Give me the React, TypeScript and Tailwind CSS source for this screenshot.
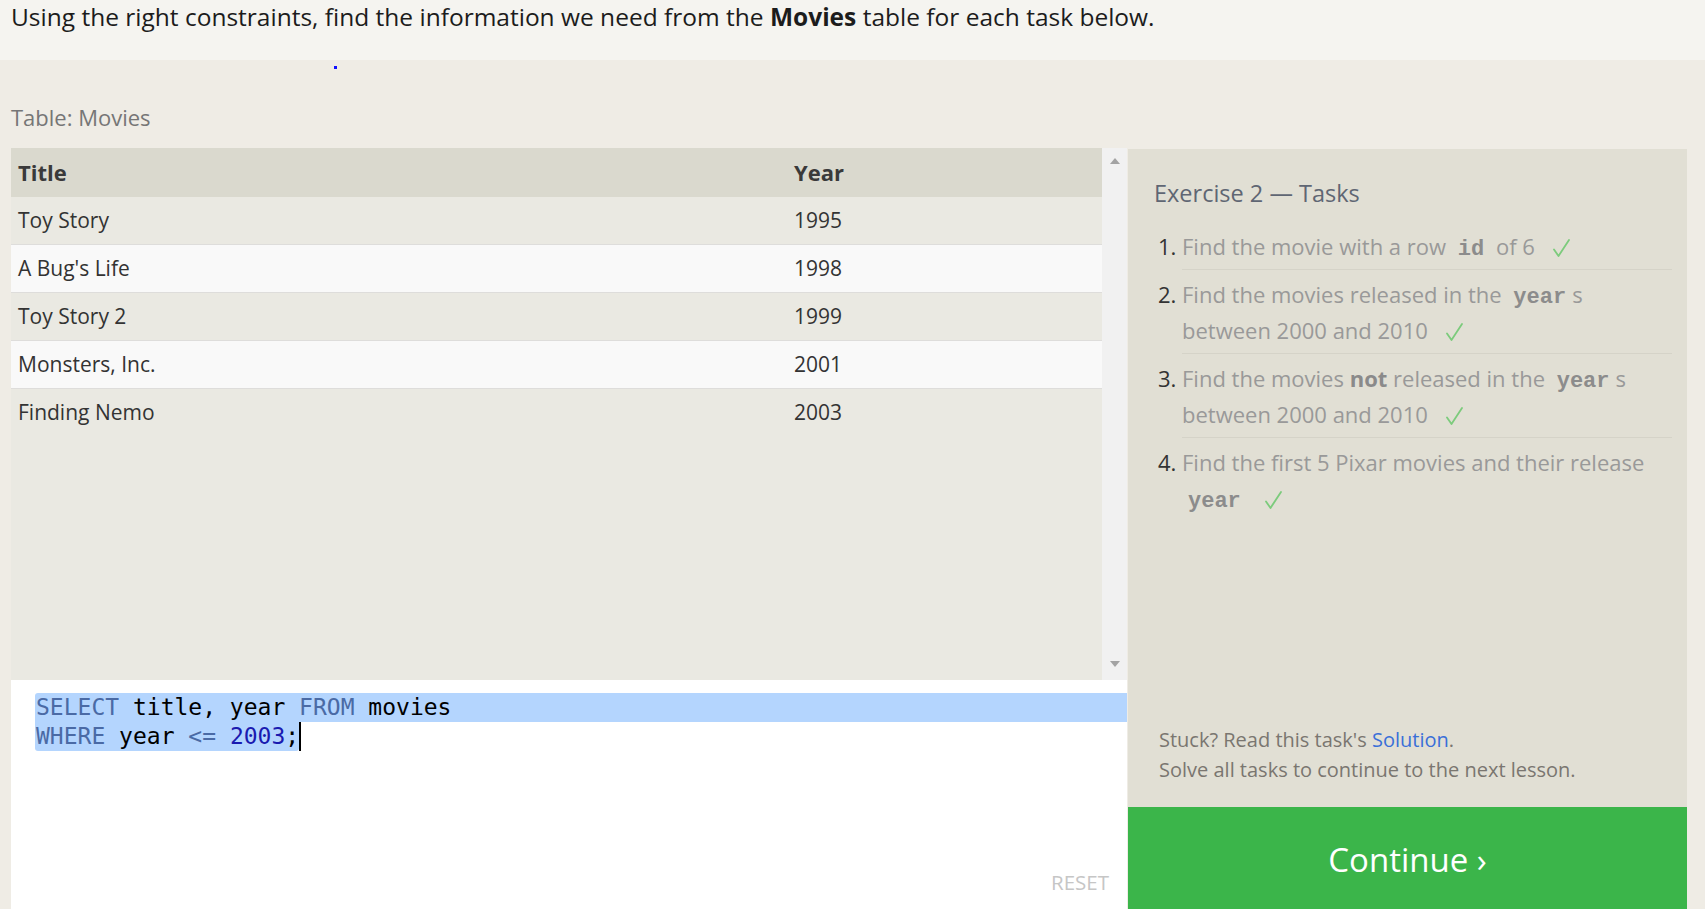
import React from "react";

const rows = [
  { title: "Toy Story", year: 1995 },
  { title: "A Bug's Life", year: 1998 },
  { title: "Toy Story 2", year: 1999 },
  { title: "Monsters, Inc.", year: 2001 },
  { title: "Finding Nemo", year: 2003 },
];

function Check() {
  return (
    <svg className="ml-[18px] inline-block align-[-2px]" width="17" height="18" viewBox="0 0 17 18" fill="none">
      <path d="M1 10.5 L5.5 17 L16 1" stroke="#7ccb7c" strokeWidth="1.8" strokeLinecap="round" strokeLinejoin="round" />
    </svg>
  );
}

function Code({ children }: { children: React.ReactNode }) {
  return (
    <code className="px-[6px] font-['Liberation_Mono',monospace] text-[22px] leading-none font-bold text-[#8c8c8c]">
      {children}
    </code>
  );
}

function Task({ n, children, last }: { n: number; children: React.ReactNode; last?: boolean }) {
  return (
    <li className="flex">
      <span className="w-[28px] shrink-0 pl-[4px] pt-[6px] text-[#333]">{n}.</span>
      <div className={"flex-1 pt-[6px] pb-[5px] " + (last ? "" : "border-b border-[#d5d3c8]")}>{children}</div>
    </li>
  );
}

export default function App() {
  return (
    <div className="h-[909px] w-full overflow-hidden bg-[#efece5] font-['Open_Sans',sans-serif]">
      <div className="h-[60px] bg-[#f5f4f0] px-[11px] pt-[1px] text-[24.5px] leading-[32px] text-[#1c1c1c]">
        Using the right constraints, find the information we need from the <b>Movies</b> table for each task below.
      </div>
      <div className="h-[88px] pl-[11px] pt-[6px]">
        <div className="ml-[323px] h-[3px] w-[3px] bg-[#1010ff]" />
        <div className="mt-[34px] text-[22px] leading-[28px] text-[#767676]">Table: Movies</div>
      </div>

      <div className="flex h-[761px]">
        <div className="ml-[11px] flex w-[1116px] flex-col">
          <div className="flex h-[532px]">
            <div className="w-[1091px] bg-[#eae9e2] text-[21px] text-[#333]">
              <div className="flex h-[49px] items-center bg-[#dad9ce] text-[22px] font-bold text-[#3a3a3a]">
                <div className="w-[775px] pl-[7px]">Title</div>
                <div className="pl-[8px]">Year</div>
              </div>
              {rows.map((r, i) => (
                <div
                  key={r.title}
                  className={
                    "flex h-[48px] items-center " +
                    (i < rows.length - 1 ? "border-b border-[#dedddb] " : "") +
                    (i % 2 === 0 ? "bg-[#eae9e2]" : "bg-[#f9f9f9]")
                  }
                >
                  <div className="w-[775px] pl-[7px]">{r.title}</div>
                  <div className="pl-[8px]">{r.year}</div>
                </div>
              ))}
            </div>
            <div className="flex w-[25px] flex-col items-center justify-between bg-[#f1f1f1] pt-[10px] pb-[13px]">
              <div className="h-0 w-0 border-x-[5px] border-b-[6px] border-x-transparent border-b-[#a3a3a3]" />
              <div className="h-0 w-0 border-x-[5px] border-t-[6px] border-x-transparent border-t-[#a3a3a3]" />
            </div>
          </div>

          <div className="flex flex-1 flex-col bg-white pt-[13px]">
            <div className="pl-[24px] font-['DejaVu_Sans_Mono',monospace] text-[23px] leading-[29px] text-black">
              <div className="rounded-tl-[3px] bg-[#b4d5fe] pl-[1px]">
                <span className="text-[#4a6aa5]">SELECT</span> title, year <span className="text-[#4a6aa5]">FROM</span> movies
              </div>
              <div className="flex">
                <span className="rounded-b-[3px] bg-[#b4d5fe] pl-[1px]">
                  <span className="text-[#4a6aa5]">WHERE</span> year <span className="text-[#4a6aa5]">&lt;=</span>{" "}
                  <span className="text-[#1a1ab0]">2003</span>;
                </span>
                <span className="h-[29px] w-[2px] bg-black" />
              </div>
            </div>
            <div className="mt-auto self-end pr-[18px] pb-[14px] text-[20.5px] leading-[26px] text-[#c6c6c6]">RESET</div>
          </div>
        </div>

        <div className="ml-[1px] mt-[1px] flex w-[559px] flex-col bg-[#e1dfd4]">
          <div className="flex-1 pl-[26px] pr-[15px] pt-[29px]">
            <h2 className="text-[23.5px] leading-[30px] text-[#5f6673]">Exercise 2 — Tasks</h2>
            <ol className="mt-[14px] text-[22px] leading-[36px] text-[#999]">
              <Task n={1}>
                Find the movie with a row <Code>id</Code> of 6
                <Check />
              </Task>
              <Task n={2}>
                Find the movies released in the <Code>year</Code>s between 2000 and 2010
                <Check />
              </Task>
              <Task n={3}>
                Find the movies <b className="text-[#8a8a8a]">not</b> released in the <Code>year</Code>s between 2000 and 2010
                <Check />
              </Task>
              <Task n={4} last>
                Find the first 5 Pixar movies and their release <Code>year</Code>
                <Check />
              </Task>
            </ol>
          </div>
          <div className="pl-[31px] pb-[22px] text-[20px] leading-[30px] text-[#7a7670]">
            <p>
              Stuck? Read this task's <span className="text-[#3a6fd8]">Solution</span>.
            </p>
            <p>Solve all tasks to continue to the next lesson.</p>
          </div>
          <div className="flex h-[102px] shrink-0 items-center justify-center bg-[#3bb54a] pt-[4px] text-[33px] text-white">
            Continue ›
          </div>
        </div>
      </div>
    </div>
  );
}
